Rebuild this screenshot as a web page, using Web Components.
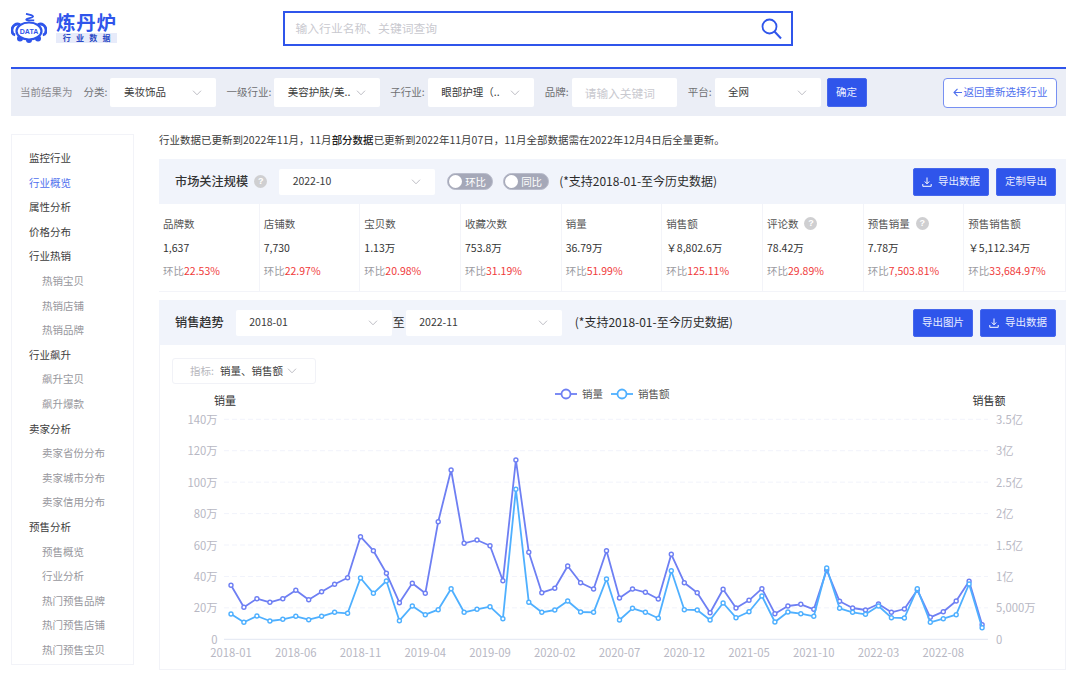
<!DOCTYPE html>
<html lang="zh"><head><meta charset="utf-8"><title>炼丹炉 行业数据</title>
<style>
html,body{margin:0;height:682px;overflow:hidden;background:#fff}
body{font:10.5px/1.4 "Noto Sans CJK SC","Noto Sans",sans-serif;color:#333}
.shell{display:block;padding:0 14px 0 11px}
.content{display:flex;gap:25px;margin-top:18px;align-items:flex-start}
.main{flex:1;min-width:0;display:flex;flex-direction:column}
</style></head><body>
<div class="shell">
<app-header></app-header>
<filter-bar></filter-bar>
<div class="content">
<side-nav></side-nav>
<div class="main">
<update-notice></update-notice>
<section-head title="市场关注规模" style="margin-top:12px">
  <help-dot style="margin-left:6px"></help-dot>
  <ui-select value="2022-10" w="156" h="26" style="margin-left:12px;background:#fff"></ui-select>
  <ui-toggle text="环比" style="margin-left:12px"></ui-toggle>
  <ui-toggle text="同比" style="margin-left:10px"></ui-toggle>
  <span style="margin-left:10px;font-size:12px;color:#2c2c2c">(*支持2018-01-至今历史数据)</span>
  <span style="flex:1"></span>
  <ui-button icon="1" w="76">导出数据</ui-button>
  <ui-button w="60" style="margin-left:7px">定制导出</ui-button>
</section-head>
<metric-row></metric-row>
<section-head title="销售趋势" style="margin-top:8px">
  <ui-select value="2018-01" w="156" h="26" style="margin-left:12px"></ui-select>
  <span style="width:14px;text-align:center;font-size:12px;color:#2c2c2c">至</span>
  <ui-select value="2022-11" w="156" h="26"></ui-select>
  <span style="margin-left:13px;font-size:12px;color:#2c2c2c">(*支持2018-01-至今历史数据)</span>
  <span style="flex:1"></span>
  <ui-button w="60">导出图片</ui-button>
  <ui-button icon="1" w="76" style="margin-left:7px">导出数据</ui-button>
</section-head>
<trend-chart></trend-chart>
</div></div></div>
<script>
const BLUE='#2f55eb';
const chev=(c='#bdbdc4')=>`<svg width="10" height="6" viewBox="0 0 10 6" style="flex:none"><path d="M1 .7 5 4.8 9 .7" fill="none" stroke="${c}" stroke-width="1"/></svg>`;
class El extends HTMLElement{
  constructor(){super();this.attachShadow({mode:'open'})}
  connectedCallback(){this.shadowRoot.innerHTML=this.html()}
}
const def=(n,html)=>customElements.define(n,class extends El{html(){return html.call(this)}});

def('brand-logo',()=>`<style>
:host{display:flex;align-items:center;gap:9px}
svg{display:block;flex:none}
.t{display:flex;flex-direction:column}
.n{font-size:19.500px;line-height:20px;font-weight:700;letter-spacing:.8px;color:${BLUE};white-space:nowrap}
.s{margin-top:1px;height:10px;width:61px;background:#e7ebfa;color:#2a49c4;font-size:8px;line-height:10px;font-weight:700;display:flex;justify-content:space-around;padding:0 4px;box-sizing:border-box}
</style>
<svg width="36" height="30" viewBox="0 0 36 30">
<path d="M15 .8c4 .8 7.500 1.700 7 3-.6 1.500-6.800 1.200-6.800 2.900 0 .9 4 .7 8 .7" fill="none" stroke="${BLUE}" stroke-width="1.800"/>
<path d="M9 12q9-6.500 18 0z" fill="${BLUE}"/>
<path d="M9 11.500c-4-1.500-7.500.8-8 5-.3 3 1 5 3.200 5.300M27 11.500c4-1.500 7.500.8 8 5 .3 3-1 5-3.200 5.300" fill="none" stroke="${BLUE}" stroke-width="2.800"/>
<circle cx="9" cy="25.500" r="3" fill="${BLUE}"/><circle cx="18" cy="27" r="3" fill="${BLUE}"/><circle cx="27" cy="25.500" r="3" fill="${BLUE}"/>
<ellipse cx="18" cy="18" rx="12.500" ry="8.500" fill="#fff" stroke="${BLUE}" stroke-width="2.200"/>
<text x="18" y="20.500" font-size="7" font-weight="700" text-anchor="middle" fill="${BLUE}" font-family="Liberation Sans">DATA</text>
</svg>
<div class="t"><div class="n">炼丹炉</div><div class="s"><span>行</span><span>业</span><span>数</span><span>据</span></div></div>`);

def('app-header',()=>`<style>
:host{display:flex;height:67px;box-sizing:border-box;align-items:flex-start}
brand-logo{margin-top:12px}
.search{margin:11px 0 0 165.500px;width:510px;height:35px;box-sizing:border-box;border:2px solid ${BLUE};display:flex;align-items:center;padding:0 9px 0 11px}
.p{flex:1;color:#c9c9cf;font-size:11.800px}
</style><brand-logo></brand-logo>
<div class="search"><span class="p">输入行业名称、关键词查询</span>
<svg width="21" height="22" viewBox="0 0 21 22"><circle cx="8.500" cy="8.500" r="7" fill="none" stroke="${BLUE}" stroke-width="1.800"/><path d="M13.500 13.500 20 20.500" stroke="${BLUE}" stroke-width="2"/></svg></div>`);

def('ui-select',function(){const w=this.getAttribute('w')||106,h=this.getAttribute('h')||29;return `<style>
:host{display:block;flex:none;background:#fff;border-radius:2px}
.b{width:${w}px;height:${h}px;box-sizing:border-box;display:flex;align-items:center;justify-content:space-between;padding:0 14px 0 13.500px;font-size:10.500px;color:#3a3a3a;white-space:nowrap}
</style><div class="b"><span>${this.getAttribute('value')}</span>${chev()}</div>`});

def('ui-toggle',function(){return `<style>
:host{display:block;flex:none}
.t{width:46px;height:17px;box-sizing:border-box;border-radius:9px;background:#a5a8b8;border:1px solid #b9bccb;color:#fff;font-size:10.500px;line-height:15px;display:flex;align-items:center;gap:3px;padding-left:1px}
i{width:13px;height:13px;border-radius:50%;background:#fff;display:block}
</style><div class="t"><i></i><span>${this.getAttribute('text')}</span></div>`});

def('help-dot',()=>`<style>
:host{display:inline-flex;flex:none;width:13px;height:13px;border-radius:50%;background:#cfcfd1;color:#fff;font:700 9px/13px "Liberation Sans",sans-serif;justify-content:center}
</style>?`);

def('ui-button',function(){const ic=this.hasAttribute('icon');return `<style>
:host{display:block;flex:none}
.b{width:${this.getAttribute('w')}px;height:28px;box-sizing:border-box;background:${BLUE};border:1px solid #4667ec;border-radius:2px;color:#e9edff;font-size:10.500px;display:flex;align-items:center;justify-content:center;gap:6px;white-space:nowrap}
</style><div class="b">${ic?`<svg width="10" height="10" viewBox="0 0 10 10"><path d="M5 .5v6M2.800 4.500 5 6.800 7.200 4.500M.8 7v2.300h8.400V7" fill="none" stroke="#fff" stroke-width="1"/></svg>`:''}<slot></slot></div>`});

def('filter-bar',()=>{
 const lab=(t,ml)=>`<span class="l" style="margin-left:${ml}px">${t}</span>`;
 return `<style>
:host{display:flex;align-items:center;height:49px;box-sizing:border-box;border-top:2px solid ${BLUE};background:#ebeef6;padding:0 9px;white-space:nowrap;width:1055px}
.l{color:#6e6e72;font-size:10.500px;margin-right:3px}
.f{color:#8b8b90;font-size:10.500px}
.in{width:105px;height:29px;box-sizing:border-box;background:#fff;border-radius:2px;color:#c9c9cf;font-size:11.700px;line-height:29px;padding-left:13px}
.ok{width:40px;height:29px;margin-left:6px;background:${BLUE};border:1px solid #4667ec;border-radius:2px;box-sizing:border-box;color:#e9edff;font-size:10.500px;display:flex;align-items:center;justify-content:center}
.back{margin-left:auto;width:114px;height:30px;box-sizing:border-box;background:#fff;border:1px solid #7790f2;border-radius:4px;color:#4f70ee;font-size:10.500px;display:flex;align-items:center;justify-content:center;gap:2px}
</style>
<span class="f">当前结果为</span>${lab('分类:',11)}<ui-select value="美妆饰品"></ui-select>
${lab('一级行业:',10)}<ui-select value="美容护肤/美.."></ui-select>
${lab('子行业:',10)}<ui-select value="眼部护理（.."></ui-select>
${lab('品牌:',11)}<div class="in">请输入关键词</div>
${lab('平台:',11)}<ui-select value="全网"></ui-select>
<div class="ok">确定</div>
<div class="back"><svg width="9" height="9" viewBox="0 0 9 9"><path d="M4.500.8 1 4.500l3.500 3.700M1 4.500h8" fill="none" stroke="#4f70ee" stroke-width="1.100"/></svg><span>返回重新选择行业</span></div>`});

def('side-nav',()=>{
 const items=[['监控行业'],['行业概览','a'],['属性分析'],['价格分布'],['行业热销'],['热销宝贝','s'],['热销店铺','s'],['热销品牌','s'],['行业飙升'],['飙升宝贝','s'],['飙升爆款','s'],['卖家分析'],['卖家省份分布','s'],['卖家城市分布','s'],['卖家信用分布','s'],['预售分析'],['预售概览','s'],['行业分析','s'],['热门预售品牌','s'],['热门预售店铺','s'],['热门预售宝贝','s']];
 return `<style>
:host{display:block;width:123px;height:531px;box-sizing:border-box;border:1px solid #f2f3f8;padding:11px 0 0 17px;flex:none}
div{height:24.600px;line-height:24.600px;font-size:10.500px;color:#3c3c3c;white-space:nowrap}
.a{color:#4f70ee}.s{color:#97979d;padding-left:13px}
</style>${items.map(([t,c])=>`<div class="${c||''}">${t}</div>`).join('')}`});

def('update-notice',()=>`<style>:host{display:block;height:13px;font-size:10.500px;line-height:11px;color:#3c3c3c;white-space:nowrap}b{font-weight:500;color:#222}</style>行业数据已更新到2022年11月，11月<b>部分数据</b>已更新到2022年11月07日，11月全部数据需在2022年12月4日后全量更新。`);

def('section-head',function(){return `<style>
:host{display:flex;align-items:center;height:45px;box-sizing:border-box;background:#f1f4fb;padding:0 10px 0 16px;white-space:nowrap}
.t{font-size:12.200px;font-weight:500;color:#333}
</style><span class="t">${this.getAttribute('title')}</span><slot></slot>`});

def('metric-row',()=>{
 const m=[['品牌数','1,637','22.53%'],['店铺数','7,730','22.97%'],['宝贝数','1.13万','20.98%'],['收藏次数','753.8万','31.19%'],['销量','36.79万','51.99%'],['销售额','￥8,802.6万','125.11%'],['评论数','78.42万','29.89%',1],['预售销量','7.78万','7,503.81%',1],['预售销售额','￥5,112.34万','33,684.97%']];
 return `<style>
:host{display:grid;grid-template-columns:repeat(9,1fr);height:88px;box-sizing:border-box;border-bottom:1px solid #f3f4f9;border-right:1px solid #f3f4f9}
.c{border-right:1px solid #f3f4f9;padding:8px 0 0 4px;white-space:nowrap}
.c:last-child{border-right:0}
.r{height:23.500px;line-height:23.500px;display:flex;align-items:center;gap:6px;color:#555}
.v{color:#333}.g{color:#9a9a9f;gap:0}.g em{font-style:normal;color:#f03a3a}
</style>${m.map(x=>`<div class="c"><div class="r">${x[0]}${x[3]?'<help-dot></help-dot>':''}</div><div class="r v">${x[1]}</div><div class="r g">环比<em>${x[2]}</em></div></div>`).join('')}`});

def('trend-chart',()=>{
 const Z=z=>410+z/3,X=i=>231+12.95*i;
 const a=[526,592,566,577,566,541,569,545,523,503,380,422,490,578,520,550,335,180,400,390,407,512,150,427,548,535,468,518,537,422,564,537,547,567,433,518,548,608,538,594,571,536,611,588,583,598,480,574,594,600,582,607,597,540,622,605,573,514,644];
 const b=[612,637,618,633,628,619,629,619,607,610,504,550,513,632,588,614,599,536,607,598,590,626,238,577,607,600,573,606,607,507,630,595,607,625,482,599,600,630,579,623,605,558,636,606,611,619,474,595,607,613,588,623,624,536,637,626,614,522,653];
 const series=(d,c)=>`<polyline points="${d.map((z,i)=>X(i).toFixed(1)+','+Z(z).toFixed(1)).join(' ')}" fill="none" stroke="${c}" stroke-width="1.800" stroke-linejoin="round"/>`+d.map((z,i)=>`<circle cx="${X(i).toFixed(1)}" cy="${Z(z).toFixed(1)}" r="2" fill="#fff" stroke="${c}" stroke-width="1.400"/>`).join('');
 const L=['0','20万','40万','60万','80万','100万','120万','140万'],R=['0','5,000万','1亿','1.5亿','2亿','2.5亿','3亿','3.5亿'];
 const yy=k=>639.3-31.43*k;
 let g='';
 for(let k=0;k<8;k++){
  g+=k?`<line x1="224" x2="988" y1="${yy(k)}" y2="${yy(k)}" stroke="#f1f3fb" stroke-width="1" stroke-dasharray="5 3"/>`:`<line x1="224" x2="988" y1="639.300" y2="639.300" stroke="#e2e7f2"/>`;
  g+=`<text x="217.500" y="${yy(k)+4.5}" text-anchor="end" class="ax">${L[k]}</text><text x="996" y="${yy(k)+4.5}" class="ax">${R[k]}</text>`;
 }
 const xl=['2018-01','2018-06','2018-11','2019-04','2019-09','2020-02','2020-07','2020-12','2021-05','2021-10','2022-03','2022-08'];
 xl.forEach((t,i)=>g+=`<text x="${X(i*5)}" y="657" text-anchor="middle" class="ax">${t}</text>`);
 const leg=(x,c,t)=>`<path d="M${x} 394h22" stroke="${c}" stroke-width="1.800"/><circle cx="${x+11}" cy="394" r="4.500" fill="#fff" stroke="${c}" stroke-width="1.800"/><text x="${x+27}" y="398" class="lg">${t}</text>`;
 return `<style>
:host{display:block;position:relative;height:325px;box-sizing:border-box;border:1px solid #f2f3f8;border-top:0}
svg{display:block}
text{font-family:"Noto Sans CJK SC",sans-serif}
.ax{font-size:11.300px;fill:#b7b7c3}
.lg{font-size:10.500px;fill:#555}
.nm{font-size:11px;fill:#333}
.drop{position:absolute;left:12px;top:13px;width:144px;height:26px;box-sizing:border-box;border:1px solid #f1f2f7;border-radius:3px;display:flex;align-items:center;gap:4px;padding-left:17px;font-size:10.500px;color:#3c3c3c;background:#fff}
.drop i{font-style:normal;color:#b7b7bd;margin-right:6px}
</style>
<svg width="905" height="324" viewBox="160 345 905 324">${g}${leg(555,'#6e7ff3','销量')}${leg(611,'#4fb0ff','销售额')}
<text x="225" y="405" text-anchor="middle" class="nm">销量</text><text x="989" y="405" text-anchor="middle" class="nm">销售额</text>
${series(a,'#6e7ff3')}${series(b,'#4fb0ff')}</svg>
<div class="drop"><span><i>指标:</i>销量、销售额</span>${chev()}</div>`});
</script>
</body></html>
